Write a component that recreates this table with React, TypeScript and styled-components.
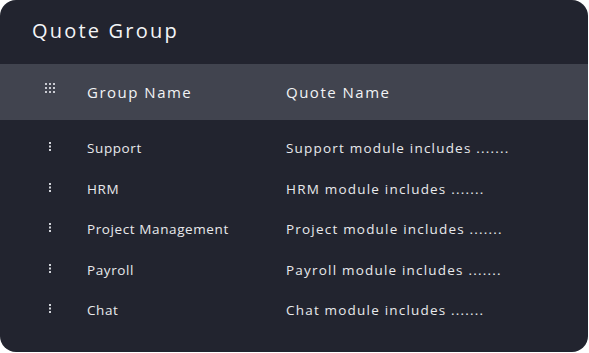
import React from "react"
import styled, { createGlobalStyle } from "styled-components"

const GlobalStyle = createGlobalStyle`
  html, body {
    margin: 0;
    padding: 0;
    background: #ffffff;
  }
  body {
    font-family: "Open Sans", "Noto Sans", sans-serif;
  }
`

const Card = styled.div`
  width: 588px;
  height: 352px;
  background-color: #22242f;
  border-radius: 16px;
  overflow: hidden;
  color: #eef0f3;
`

const Title = styled.h1`
  margin: 0;
  height: 64px;
  box-sizing: border-box;
  padding: 0 0 4px 32px;
  display: flex;
  align-items: center;
  font-size: 20px;
  font-weight: 400;
  letter-spacing: 2.2px;
  color: #f4f5f7;
`

const Row = styled.div<{ $head?: boolean }>`
  display: grid;
  grid-template-columns: 87px 199px 1fr;
  align-items: center;
  height: ${(p) => (p.$head ? "56px" : "40.5px")};
  background-color: ${(p) => (p.$head ? "#41444f" : "transparent")};
  font-size: ${(p) => (p.$head ? "15px" : "13.5px")};
  letter-spacing: ${(p) => (p.$head ? "1.5px" : "0.6px")};
  color: ${(p) => (p.$head ? "#f2f3f5" : "#e8e9ec")};
`

const Body = styled.div`
  padding-top: 8px;
`

const Handle = styled.div<{ $left: number; $lift: number }>`
  display: flex;
  padding-left: ${(p) => p.$left}px;
  margin-top: -${(p) => p.$lift}px;
`

const Cell = styled.div<{ $wide?: boolean }>`
  white-space: nowrap;
  letter-spacing: ${(p) => (p.$wide ? "1.2px" : "inherit")};
`

const HeadCell = styled.div`
  white-space: nowrap;
`

function GridDots() {
  const dots = []
  for (let r = 0; r < 3; r++) {
    for (let c = 0; c < 3; c++) {
      dots.push(<rect key={`${r}-${c}`} x={c * 4} y={r * 4} width={2} height={2} fill="#c9cbd2" />)
    }
  }
  return (
    <svg width="10" height="10" viewBox="0 0 10 10">
      {dots}
    </svg>
  )
}

function VDots() {
  return (
    <svg width="2" height="9" viewBox="0 0 2 9">
      <rect x={0} y={0} width={2} height={2} fill="#d2d4da" />
      <rect x={0} y={3.5} width={2} height={2} fill="#d2d4da" />
      <rect x={0} y={7} width={2} height={2} fill="#d2d4da" />
    </svg>
  )
}

const rows = [
  ["Support", "Support module includes ......."],
  ["HRM", "HRM module includes ......."],
  ["Project Management", "Project module includes ......."],
  ["Payroll", "Payroll module includes ......."],
  ["Chat", "Chat module includes ......."],
]

export default function App() {
  return (
    <>
      <GlobalStyle />
      <Card>
        <Title>Quote Group</Title>
        <Row $head>
          <Handle $left={45} $lift={8}>
            <GridDots />
          </Handle>
          <HeadCell>Group Name</HeadCell>
          <HeadCell>Quote Name</HeadCell>
        </Row>
        <Body>
          {rows.map(([g, q]) => (
            <Row key={g}>
              <Handle $left={49} $lift={3}>
                <VDots />
              </Handle>
              <Cell>{g}</Cell>
              <Cell $wide>{q}</Cell>
            </Row>
          ))}
        </Body>
      </Card>
    </>
  )
}
